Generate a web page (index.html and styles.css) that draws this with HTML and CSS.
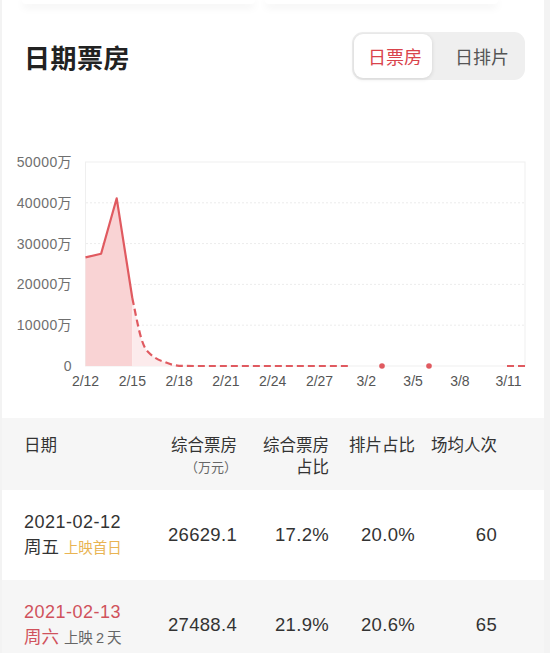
FILE: index.html
```html
<!DOCTYPE html>
<html lang="zh-CN">
<head>
    <meta charset="UTF-8">
    <meta name="viewport" content="width=device-width, initial-scale=1.0">
    <title>日期票房</title>
    <link rel="stylesheet" href="styles.css">
</head>
<body>
    <div class="page">
        <div class="summary">
            <div class="summary-card"></div>
            <div class="summary-card"></div>
        </div>

        <div class="section-head">
            <h2>日期票房</h2>
            <div class="toggle">
                <button class="active">日票房</button>
                <button>日排片</button>
            </div>
        </div>

        <svg class="chart" width="542" height="255" viewBox="2 0 542 255">
            <!-- grid -->
            <rect x="85.5" y="22" width="439.5" height="204" fill="none" stroke="#efefef" stroke-width="1"/>
            <g stroke="#ececec" stroke-width="1" stroke-dasharray="2 2">
                <line x1="86" y1="62.8" x2="525" y2="62.8"/>
                <line x1="86" y1="103.6" x2="525" y2="103.6"/>
                <line x1="86" y1="144.4" x2="525" y2="144.4"/>
                <line x1="86" y1="185.2" x2="525" y2="185.2"/>
            </g>
            <g class="y-labels" text-anchor="end">
                <text x="72" y="27">50000万</text>
                <text x="72" y="68">40000万</text>
                <text x="72" y="109">30000万</text>
                <text x="72" y="149">20000万</text>
                <text x="72" y="190">10000万</text>
                <text x="72" y="231">0</text>
            </g>
            <g class="x-labels" text-anchor="middle">
                <text x="85.5" y="246">2/12</text>
                <text x="132.3" y="246">2/15</text>
                <text x="179.1" y="246">2/18</text>
                <text x="225.9" y="246">2/21</text>
                <text x="272.7" y="246">2/24</text>
                <text x="319.5" y="246">2/27</text>
                <text x="366.3" y="246">3/2</text>
                <text x="413.1" y="246">3/5</text>
                <text x="459.9" y="246">3/8</text>
                <text x="508.5" y="246">3/11</text>
            </g>
            <!-- areas -->
            <path d="M85.5 226 L85.5 117.4 L101.1 113.8 L116.7 58.3 L132.3 158 L132.3 226 Z" fill="#f9d3d4"/>
            <path d="M132.3 226 L132.3 158 C138 185 141 205 147.9 211.7 C153 217 158 220 163.5 221.5 C169 224 174 225.5 179.1 225.8 L194.7 226 Z" fill="#fcebec"/>
            <!-- lines -->
            <path d="M85.5 117.4 L101.1 113.8 L116.7 58.3 L132.3 158" fill="none" stroke="#e05a60" stroke-width="2.2" stroke-linejoin="round"/>
            <g fill="none" stroke="#e05a60" stroke-width="2.2" stroke-dasharray="7 4">
                <path d="M132.3 158 C138 185 141 205 147.9 211.7 C153 217 158 220 163.5 221.5 C169 224 174 225.5 179.1 225.8 L194.7 226 L348 226"/>
                <path d="M507 226 L525 226"/>
            </g>
            <circle cx="382" cy="226" r="2.8" fill="#e05a60"/>
            <circle cx="429" cy="226" r="2.8" fill="#e05a60"/>
        </svg>

        <div class="table">
            <div class="row head">
                <div class="cell date">日期</div>
                <div class="cell">综合票房<small>（万元）</small></div>
                <div class="cell">综合票房<br>占比</div>
                <div class="cell">排片占比</div>
                <div class="cell">场均人次</div>
            </div>
            <div class="row">
                <div class="cell date">
                    <span class="day">2021-02-12</span>
                    <span class="week">周五 <em class="first">上映首日</em></span>
                </div>
                <div class="cell num">26629.1</div>
                <div class="cell num">17.2%</div>
                <div class="cell num">20.0%</div>
                <div class="cell num">60</div>
            </div>
            <div class="row alt weekend">
                <div class="cell date">
                    <span class="day">2021-02-13</span>
                    <span class="week">周六 <em>上映<span class="gap">2</span>天</em></span>
                </div>
                <div class="cell num">27488.4</div>
                <div class="cell num">21.9%</div>
                <div class="cell num">20.6%</div>
                <div class="cell num">65</div>
            </div>
        </div>
    </div>
</body>
</html>
```

FILE: styles.css
```css
:root { --red: #d9434b; --text: #333; --muted: #6f6f6f; --stripe: #f6f6f6; }
body { margin: 0; background: #f3f3f3; font-family: "Liberation Sans", "Noto Sans CJK SC", sans-serif; color: var(--text); }
.page { width: 542px; margin-left: 2px; min-height: 653px; background: #fff; overflow: hidden; }

.summary { display: flex; gap: 10px; height: 4px; padding-left: 20px; }
.summary-card { width: 233px; height: 4px; background: #fff; border-radius: 0 0 8px 8px; box-shadow: 0 3px 8px rgba(0, 0, 0, 0.08); }

.section-head { display: flex; justify-content: space-between; align-items: center; margin-top: 28px; padding: 0 19px 0 22px; }
.section-head h2 { margin: 0; font-size: 26px; font-weight: bold; color: #222; letter-spacing: 0.5px; }
.toggle { display: flex; padding: 2px; background: #efefef; border-radius: 11px; }
.toggle button { height: 44px; padding: 0 10px 0 14px; border: none; border-radius: 9px; background: transparent; font-family: inherit; font-size: 18px; color: #555; }
.toggle button + button { padding: 0 14px 0 23px; }
.toggle button.active { background: #fff; color: var(--red); box-shadow: 0 1px 4px rgba(0, 0, 0, 0.12); }

.chart { display: block; margin-top: 60px; }
.chart text { font-family: "Liberation Sans", "Noto Sans CJK SC", sans-serif; }
.y-labels { font-size: 14px; letter-spacing: 0.4px; fill: var(--muted); }
.x-labels { font-size: 14px; fill: #555; }

.table { margin-top: 23px; }
.row { display: grid; grid-template-columns: 1fr 92px 92px 86px 82px; align-items: center; min-height: 90px; padding: 0 47px 0 20px; box-sizing: border-box; }
.row.head { align-items: start; min-height: 72px; padding-top: 16px; background: var(--stripe); font-size: 16.5px; line-height: 22px; }
.row.alt { background: var(--stripe); }
.cell { text-align: right; }
.cell.date { text-align: left; padding-left: 2px; }
.cell small { display: block; font-size: 13px; color: #666; line-height: 24px; }
.cell.num { font-size: 18.5px; letter-spacing: 0.3px; }
.day { display: block; font-size: 18px; letter-spacing: 0.5px; line-height: 25px; }
.week { display: block; font-size: 17.5px; line-height: 25px; }
.week em { font-style: normal; font-size: 14.5px; color: #666; }
.week em.first { color: #e9b453; }
.gap { margin: 0 3px; }
.weekend .day, .weekend .week { color: #d0525c; }
.weekend .week em { color: #666; }
```
